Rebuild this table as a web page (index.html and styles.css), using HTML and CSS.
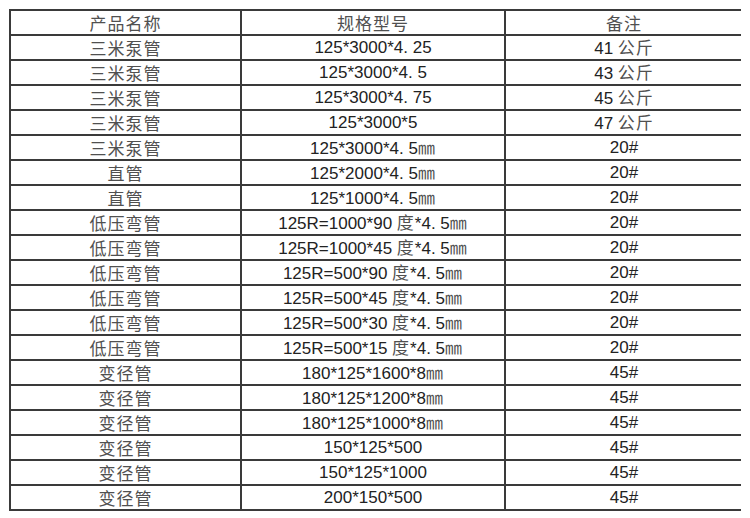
FILE: index.html
```html
<!DOCTYPE html>
<html lang="zh">
<head>
<meta charset="utf-8">
<title>产品规格表</title>
<link rel="stylesheet" href="styles.css">
</head>
<body>
<table class="spec">
  <colgroup>
    <col class="c1">
    <col class="c2">
    <col class="c3">
  </colgroup>
  <tbody>
    <tr><td class="cjk">产品名称</td><td class="cjk">规格型号</td><td class="cjk">备注</td></tr>
    <tr><td class="cjk">三米泵管</td><td>125*3000*4. 25</td><td>41 <span class="cjk">公斤</span></td></tr>
    <tr><td class="cjk">三米泵管</td><td>125*3000*4. 5</td><td>43 <span class="cjk">公斤</span></td></tr>
    <tr><td class="cjk">三米泵管</td><td>125*3000*4. 75</td><td>45 <span class="cjk">公斤</span></td></tr>
    <tr><td class="cjk">三米泵管</td><td>125*3000*5</td><td>47 <span class="cjk">公斤</span></td></tr>
    <tr><td class="cjk">三米泵管</td><td>125*3000*4. 5<span class="cjk">㎜</span></td><td>20#</td></tr>
    <tr><td class="cjk">直管</td><td>125*2000*4. 5<span class="cjk">㎜</span></td><td>20#</td></tr>
    <tr><td class="cjk">直管</td><td>125*1000*4. 5<span class="cjk">㎜</span></td><td>20#</td></tr>
    <tr><td class="cjk">低压弯管</td><td>125R=1000*90 <span class="cjk">度</span>*4. 5<span class="cjk">㎜</span></td><td>20#</td></tr>
    <tr><td class="cjk">低压弯管</td><td>125R=1000*45 <span class="cjk">度</span>*4. 5<span class="cjk">㎜</span></td><td>20#</td></tr>
    <tr><td class="cjk">低压弯管</td><td>125R=500*90 <span class="cjk">度</span>*4. 5<span class="cjk">㎜</span></td><td>20#</td></tr>
    <tr><td class="cjk">低压弯管</td><td>125R=500*45 <span class="cjk">度</span>*4. 5<span class="cjk">㎜</span></td><td>20#</td></tr>
    <tr><td class="cjk">低压弯管</td><td>125R=500*30 <span class="cjk">度</span>*4. 5<span class="cjk">㎜</span></td><td>20#</td></tr>
    <tr><td class="cjk">低压弯管</td><td>125R=500*15 <span class="cjk">度</span>*4. 5<span class="cjk">㎜</span></td><td>20#</td></tr>
    <tr><td class="cjk">变径管</td><td>180*125*1600*8<span class="cjk">㎜</span></td><td>45#</td></tr>
    <tr><td class="cjk">变径管</td><td>180*125*1200*8<span class="cjk">㎜</span></td><td>45#</td></tr>
    <tr><td class="cjk">变径管</td><td>180*125*1000*8<span class="cjk">㎜</span></td><td>45#</td></tr>
    <tr><td class="cjk">变径管</td><td>150*125*500</td><td>45#</td></tr>
    <tr><td class="cjk">变径管</td><td>150*125*1000</td><td>45#</td></tr>
    <tr><td class="cjk">变径管</td><td>200*150*500</td><td>45#</td></tr>
  </tbody>
</table>
</body>
</html>
```
FILE: styles.css
```css
html, body {
  background: #ffffff;
}
body {
  margin: 9px;
  font-family: "Liberation Sans", Arial, "Noto Sans CJK SC", sans-serif;
  font-size: 17px;
  color: #222222;
}
.spec {
  border-collapse: collapse;
  table-layout: fixed;
  width: 733px;
}
.c1 { width: 231px; }
.c2 { width: 264px; }
.c3 { width: 238px; }
.spec tr {
  height: 25px;
}
.spec td {
  border: 2px solid #3a3a3a;
  height: 23px;
  padding: 0;
  line-height: 16px;
  vertical-align: middle;
  text-align: center;
  white-space: nowrap;
  overflow: hidden;
}
.cjk {
  font-family: "Noto Sans CJK SC", sans-serif;
  line-height: 16px;
  letter-spacing: 1px;
  color: #505050;
}
```
